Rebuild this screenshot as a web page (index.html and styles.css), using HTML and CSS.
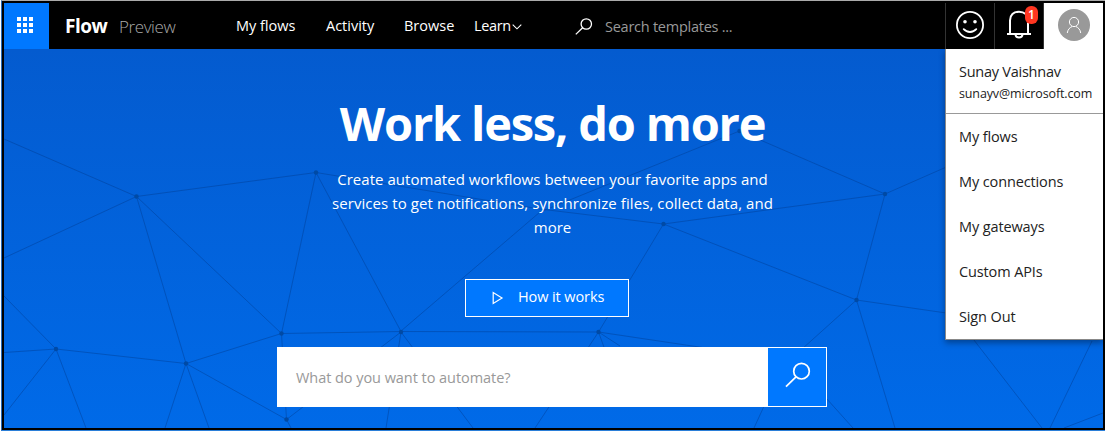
FILE: index.html
```html
<!DOCTYPE html>
<html lang="en">
<head>
<meta charset="utf-8">
<title>Flow Preview</title>
<link rel="stylesheet" href="styles.css">
</head>
<body>
<div class="page">
  <header class="bar">
    <button class="launcher" aria-label="App launcher">
      <svg width="16" height="16" viewBox="0 0 16 16" fill="#fff"><path d="M0 0h4v4H0zM6 0h4v4H6zM12 0h4v4h-4zM0 6h4v4H0zM6 6h4v4H6zM12 6h4v4h-4zM0 12h4v4H0zM6 12h4v4H6zM12 12h4v4h-4z"/></svg>
    </button>
    <div class="brand"><span class="t name">Flow</span><span class="t preview">Preview</span></div>
    <nav class="nav">
      <a class="t n1">My flows</a><a class="t n2">Activity</a><a class="t n3">Browse</a><a class="t n4">Learn</a>
      <svg class="chev" width="10" height="6" viewBox="0 0 10 6" fill="none" stroke="#fff" stroke-width="1.1"><path d="M.7.7 5 4.8 9.3.7"/></svg>
    </nav>
    <div class="find">
      <svg width="18" height="18" viewBox="0 0 18 18" fill="none" stroke="#fff" stroke-width="1.3"><circle cx="11.3" cy="6" r="5.2"/><path d="M7.6 9.7.8 16.4"/></svg>
      <span class="t hint">Search templates ...</span>
    </div>
    <div class="tools">
      <div class="tool">
        <svg width="30" height="30" viewBox="0 0 30 30" fill="none" stroke="#fff" stroke-width="1.8"><circle cx="15" cy="15" r="13.1"/><path d="M8.7 19.2c3.3 3.7 9.3 3.7 12.6 0" stroke-linecap="round"/><circle cx="10" cy="11.7" r="1.8" fill="#fff" stroke="none"/><circle cx="20" cy="11.7" r="1.8" fill="#fff" stroke="none"/></svg>
      </div>
      <div class="tool bell">
        <svg width="26" height="30" viewBox="0 0 26 30" fill="none" stroke="#fff" stroke-width="2"><path d="M1 24h24M4 24V10.500C4 5 7.500 1.800 13 1.800S22 5 22 10.500V24"/><path d="M9.500 24.500c.3 4 6.700 4 7 0"/></svg>
        <span class="badge">1</span>
      </div>
      <div class="tool user">
        <span class="avatar"><svg width="16" height="18" viewBox="0 0 16 18" fill="none" stroke="#fff" stroke-width="1"><circle cx="8" cy="6" r="4.600"/><path d="M1.300 17c.4-3.600 2.600-5.500 4.700-6.400M14.700 17c-.4-3.600-2.600-5.500-4.700-6.400"/></svg></span>
      </div>
    </div>
  </header>
  <main class="hero">
    <svg class="mesh" width="1099" height="379" viewBox="4 49 1099 379">
      <g fill="none" stroke="#003c91" stroke-opacity=".45" stroke-width="1">
        <path d="M4 139 136.500 196.500 316 172.500 540 209 663.500 224 885 194 739.500 131 540 212 401 331M4 258 136.500 196.500 281.500 333.500 316 172.500 401 331.500M136.500 196.500 186 363.500 281.500 333.500 401 331.500 598.500 332 663.500 224 856.500 300 885 194 960 161"/>
        <path d="M4 296 56 349 4 352.500M4 415 56 349 186 363.500 286.500 419.500 401 332 386 428M56 349 86 428M165 428 186 363.500 209 428M281.500 333.500 286.500 419.500 291 428M401 332 473 428M598.500 332 535 428M598.500 332 766 357M598.500 332 605 350M598.500 332 620 346M856.500 300 782 367 754 428M782 349 853 428M856.500 300 895 428M856.500 300 960 315M960 322 1042 428M1064 428 1103 413M1050 428 1092 341"/>
      </g>
      <g fill="#004aa5"><circle cx="136.500" cy="196.500" r="2.200"/><circle cx="316" cy="172.500" r="2.200"/><circle cx="281.500" cy="333.500" r="2.200"/><circle cx="56" cy="349" r="2.200"/><circle cx="186" cy="363.500" r="2.200"/><circle cx="286.500" cy="419.500" r="2.200"/><circle cx="401" cy="332" r="2.200"/><circle cx="598.500" cy="332" r="2.200"/><circle cx="663.500" cy="224" r="2.200"/><circle cx="739.500" cy="131" r="2.200"/><circle cx="885" cy="194" r="2.200"/><circle cx="856.500" cy="300" r="2.200"/></g>
    </svg>
    <h1 class="title"><span class="t">Work less, do more</span></h1>
    <p class="lead"><span class="t l1">Create automated workflows between your favorite apps and</span><span class="t l2">services to get notifications, synchronize files, collect data, and</span><span class="t l3">more</span></p>
    <button class="how">
      <svg width="12" height="14" viewBox="0 0 12 14" fill="none" stroke="#fff" stroke-width="1.200"><path d="M1.200 1.500v11L10 7z"/></svg>
      <span class="t howt">How it works</span>
    </button>
    <div class="search">
      <div class="field"><span class="t ask">What do you want to automate?</span></div>
      <button class="go" aria-label="Search"><svg width="26" height="26" viewBox="0 0 26 26" fill="none" stroke="#fff" stroke-width="1.700"><circle cx="16.500" cy="9.200" r="7.800"/><path d="M11 14.800 1 24.600"/></svg></button>
    </div>
  </main>
  <aside class="menu">
    <div class="who"><span class="t w1">Sunay Vaishnav</span><span class="t w2">sunayv@microsoft.com</span></div>
    <ul class="links"><li><span class="t m1">My flows</span></li><li><span class="t m2">My connections</span></li><li><span class="t m3">My gateways</span></li><li><span class="t m4">Custom APIs</span></li><li><span class="t m5">Sign Out</span></li></ul>
  </aside>
</div>
</body>
</html>
```
FILE: styles.css
```css
* { box-sizing: border-box; }
body { margin: 0; width: 1106px; height: 431px; overflow: hidden; background: #fff; padding: 0 1px 0 1px; font-family: "Open Sans", "Noto Sans", sans-serif; }
button { border: 0; padding: 0; margin: 0; font: inherit; color: inherit; }
svg { display: block; flex: none; }
.t { white-space: nowrap; display: block; }
.page { position: relative; width: 1104px; height: 431px; background: #000; border-top: 1px solid #aaa; border-left: 1px solid #2b6cb8; border-bottom: 1px solid #2b7fd8; padding: 2px 2px 2px 2px; display: flex; flex-direction: column; }
.bar { height: 46px; flex: none; display: flex; color: #fff; font-size: 14.5px; }
.launcher { width: 45px; height: 46px; background: #0078ff; display: flex; align-items: center; justify-content: center; padding-right: 3px; padding-bottom: 2px; }
.brand { display: flex; width: 187px; padding-left: 16px; line-height: 46px; gap: 11px; }
.name { font-size: 19px; font-weight: 700; width: 43px; letter-spacing: -.5px; }
.preview { font-size: 17px; font-weight: 300; color: #aaa; letter-spacing: -.4px; line-height: 47px; }
.nav { width: 339px; display: flex; line-height: 46px; }
.n1 { width: 90px; } .n2 { width: 78px; } .n3 { width: 70px; } .n4 { width: 37px; letter-spacing: -.35px; }
.chev { margin-top: 21px; margin-left: 1px; }
.find { width: 366px; display: flex; line-height: 47px; }
.find svg { margin-top: 15px; }
.hint { margin-left: 12px; color: #999; letter-spacing: -.25px; }
.tools { display: flex; margin-left: auto; }
.tool { width: 49px; border-left: 1px solid #333; display: flex; justify-content: center; padding-top: 7px; position: relative; }
.badge { position: absolute; left: 30px; top: 3px; width: 13px; height: 18px; border-radius: 6px; background: #ff3621; font-size: 12px; font-weight: 600; line-height: 18px; text-align: center; }
.user { width: 60px; background: #fff; border-left: 1px solid #333; padding-top: 6px; }
.avatar { width: 32px; height: 32px; border-radius: 50%; background: #999; display: flex; align-items: center; justify-content: center; }
.hero { position: relative; height: 379px; background: linear-gradient(#045bcf, #006ae8); display: flex; flex-direction: column; align-items: center; color: #fff; overflow: hidden; }
.mesh { position: absolute; left: 0; top: 0; }
.title, .lead, .how, .search { position: relative; }
.title { margin: 44px 2px 0 0; height: 60px; font-size: 47px; line-height: 60px; font-weight: 700; letter-spacing: -1.2px; }
.lead { margin: 14px 2px 0 0; font-size: 15px; line-height: 24px; display: flex; flex-direction: column; align-items: center; }
.l1 { letter-spacing: .04px; }
.l2 { letter-spacing: .08px; }
.how { margin-top: 40px; margin-right: 13px; width: 164px; height: 38px; border: 1px solid #fff; background: #0078ff; display: flex; align-items: center; padding-left: 26px; font-size: 14.5px; line-height: 34px; }
.howt { margin-left: 14px; padding-bottom: 2px; letter-spacing: -.1px; }
.search { margin-top: 30px; margin-right: 3px; width: 550px; height: 60px; display: flex; border: 1px solid #fff; background: #fff; }
.field { width: 490px; padding-left: 18px; line-height: 59px; font-size: 14.5px; color: #999; letter-spacing: -.05px; }
.go { width: 58px; height: 58px; background: #0078ff; padding: 0 0 4px 17px; }
.menu { position: absolute; left: 943px; top: 48px; width: 158px; height: 291px; background: #fff; border-left: 1px solid #888; border-bottom: 1px solid #888; color: #222; box-shadow: 0 3px 6px rgba(0,0,0,.35); clip-path: inset(0 0 -12px -12px); }
.who { height: 65px; border-bottom: 1px solid #999; padding: 12px 0 0 13px; line-height: 21px; font-size: 14.5px; }
.w1 { letter-spacing: -.25px; }
.w2 { font-size: 12.5px; letter-spacing: -.13px; line-height: 23px; }
.links { list-style: none; margin: 0; padding: 0 0 0 13px; font-size: 14.5px; line-height: 45px; letter-spacing: -.12px; }
```
